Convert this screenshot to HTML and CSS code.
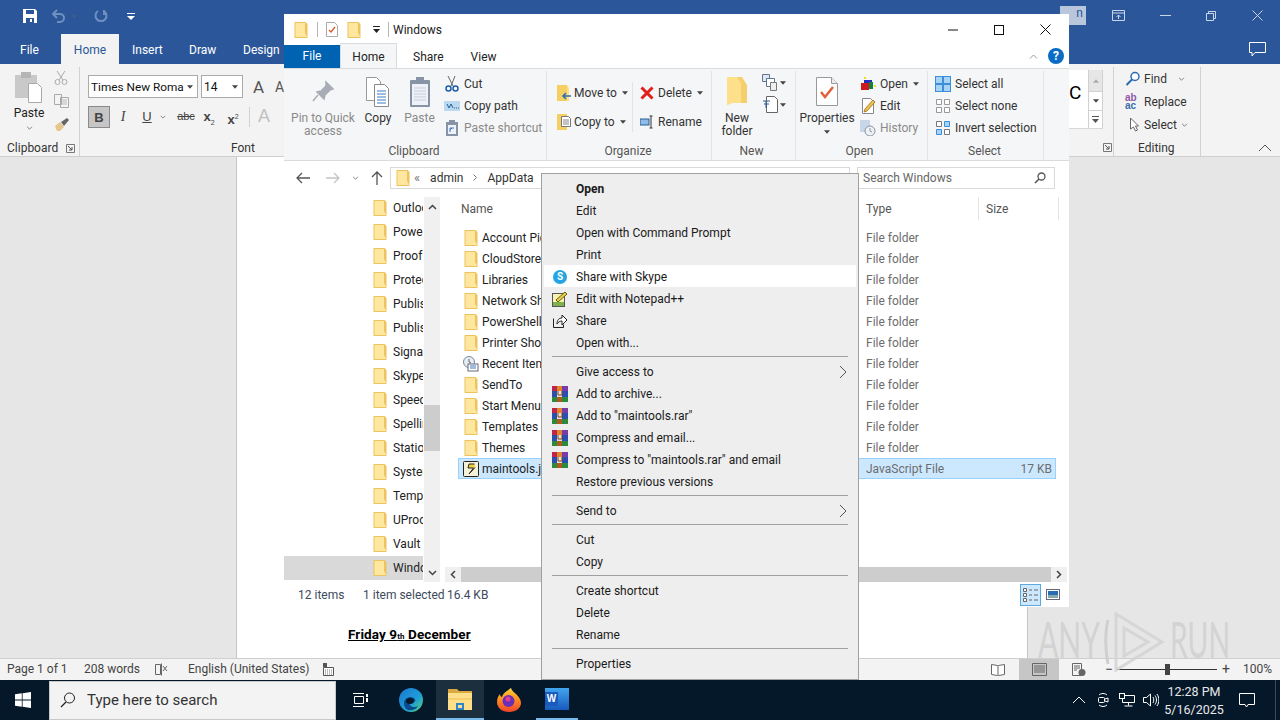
FILE: index.html
```html
<!DOCTYPE html>
<html>
<head>
    <meta charset="utf-8">
    <title>Windows</title>
    <link rel="stylesheet" href="styles.css">
</head>
<body>
<!-- shared icons -->
<svg class="defs" width="0" height="0">
    <symbol id="folder" viewBox="0 0 16 16">
        <path d="M1.500 0h11l2 2v14h-13z" fill="#eec25c"/>
        <path d="M2.500 1h9.500v10l2 3.500V15h-11.500z" fill="#ffe7a0"/>
    </symbol>
    <symbol id="rar" viewBox="0 0 16 16">
        <rect x="0" y="0" width="5" height="5" fill="#c0244a"/>
        <rect x="5" y="0" width="5" height="5" fill="#e0862a"/>
        <rect x="10" y="0" width="6" height="5" fill="#7a3aa8"/>
        <rect x="0" y="5" width="5" height="6" fill="#2a4fb0"/>
        <rect x="5" y="5" width="5" height="6" fill="#e8e0d0"/>
        <rect x="10" y="5" width="6" height="6" fill="#2a4fb0"/>
        <rect x="0" y="11" width="5" height="5" fill="#2c8a3c"/>
        <rect x="5" y="11" width="5" height="5" fill="#b05a20"/>
        <rect x="10" y="11" width="6" height="5" fill="#2c8a3c"/>
        <path d="M6 5v4h4V5" fill="none" stroke="#804018"/>
    </symbol>
    <symbol id="chev-r" viewBox="0 0 8 14">
        <path d="M1 1l6 6-6 6" fill="none" stroke="#555"/>
    </symbol>
    <symbol id="caret" viewBox="0 0 7 4">
        <path d="M0 0h7L3.500 4z" fill="#444"/>
    </symbol>
    <symbol id="vee" viewBox="0 0 8 5">
        <path d="M1 1l3 3 3-3" fill="none" stroke="#666"/>
    </symbol>
    <symbol id="launcher" viewBox="0 0 9 9">
        <path d="M.5.500h8v8h-8z" fill="none" stroke="#777"/>
        <path d="M2 2l4 4M6 3v3H3" fill="none" stroke="#555"/>
    </symbol>
</svg>

<!-- word window underneath -->
<div class="word">
    <div class="w-title">
        <div class="qat">
            <svg class="q-save" width="16" height="16" viewBox="0 0 16 16"><path d="M1 1h12l2 2v12H1z" fill="#fff"/><path d="M4 2h8v4H4zM4 10h8v5H4z" fill="#2b579a"/><rect x="8" y="11" width="2" height="3" fill="#fff"/></svg>
            <svg class="q-undo" width="14" height="14" viewBox="0 0 14 14"><path d="M5 1L1 5l4 4M1 5h7a4 4 0 0 1 0 8H5" fill="none" stroke="#6f8fbf" stroke-width="2"/></svg>
            <svg class="q-v1" width="7" height="4"><use href="#vee"/></svg>
            <svg class="q-redo" width="14" height="14" viewBox="0 0 14 14"><path d="M10 2a5.500 5.500 0 1 1-6 0M10 1v4h3" fill="none" stroke="#6f8fbf" stroke-width="2"/></svg>
            <svg class="q-more" width="8" height="8" viewBox="0 0 8 8"><path d="M0 1h8v1H0zM0 4h8L4 8z" fill="#fff"/></svg>
        </div>
        <div class="w-ctrls">
            <span class="signin">n</span>
            <svg class="c-1" width="13" height="11" viewBox="0 0 13 11"><path d="M.5.500h12v10H.500zM.5 3h12M6.500 9V5M4.500 7l2-2 2 2" fill="none" stroke="#c9d6ea"/></svg>
            <svg class="c-2" width="11" height="2"><rect width="11" height="1" fill="#c9d6ea"/></svg>
            <svg class="c-3" width="10" height="10" viewBox="0 0 10 10"><path d="M.5 2.500h7v7h-7zM2.500 2.500v-2h7v7h-2" fill="none" stroke="#c9d6ea"/></svg>
            <svg class="c-4" width="11" height="11" viewBox="0 0 11 11"><path d="M.5.500l10 10M10.500.500l-10 10" stroke="#c9d6ea" fill="none"/></svg>
        </div>
    </div>
    <div class="w-tabs">
        <span class="w-tab w-file">File</span>
        <span class="w-tab w-on">Home</span>
        <span class="w-tab w-ins">Insert</span>
        <span class="w-tab w-draw">Draw</span>
        <span class="w-tab w-design">Design</span>
        <svg class="w-comment" width="17" height="15" viewBox="0 0 17 15"><path d="M.5.500h16v10H6l-3 3.500v-3.500H.5z" fill="none" stroke="#fff"/></svg>
    </div>
    <div class="w-ribbon">
        <div class="wr-left">
            <div class="wg wg-clip">
                <div class="wg-body">
                    <div class="paste-big">
                        <svg width="28" height="31" viewBox="0 0 28 31"><rect x="0" y="3" width="22" height="23" fill="#c9c9c9"/><rect x="6" y="0" width="10" height="6" fill="#b5b5b5"/><path d="M13.500 11.500h9l4 4v15h-13z" fill="#fff" stroke="#aaa"/></svg>
                        <span>Paste</span>
                        <svg class="pb-v" width="7" height="4"><use href="#vee"/></svg>
                    </div>
                    <div class="paste-small">
                        <svg width="14" height="15" viewBox="0 0 14 15"><path d="M3 1l6 9M11 1l-6 9" stroke="#aaa" fill="none"/><circle cx="3.500" cy="12" r="2.500" fill="none" stroke="#aaa"/><circle cx="10.500" cy="12" r="2.500" fill="none" stroke="#aaa"/></svg>
                        <svg width="15" height="14" viewBox="0 0 15 14"><path d="M.5.500h7v10h-7zM6.500 3.500h8v10h-8z" fill="#f3f3f3" stroke="#aaa"/><path d="M8 6h5M8 8h5M8 10h5" stroke="#bbb"/></svg>
                        <svg width="16" height="15" viewBox="0 0 16 15"><path d="M1 9l5-4 4 5-4 4H3z" fill="#e6c78a"/><path d="M7 5l6-4 2 2-5 6z" fill="#666"/></svg>
                    </div>
                </div>
                <div class="wg-label">Clipboard<svg class="launch" width="9" height="9"><use href="#launcher"/></svg></div>
            </div>
            <div class="wg wg-font">
                <div class="wg-body wf">
                    <div class="wf-row">
                        <span class="combo c-name">Times New Roma<svg width="6" height="4"><use href="#caret"/></svg></span>
                        <span class="combo c-size">14<svg width="6" height="4"><use href="#caret"/></svg></span>
                        <span class="grow">A</span>
                        <span class="shrink">A</span>
                    </div>
                    <div class="wf-row wf-2">
                        <span class="fmt bold">B</span>
                        <span class="fmt ital">I</span>
                        <span class="fmt under">U</span>
                        <svg width="6" height="4"><use href="#vee"/></svg>
                        <span class="fmt strike">abc</span>
                        <span class="fmt subs">x<sub>2</sub></span>
                        <span class="fmt sups">x<sup>2</sup></span>
                        <span class="fmt-sep"></span>
                        <span class="fmt fade">A</span>
                    </div>
                </div>
                <div class="wg-label wl-font">Font</div>
            </div>
        </div>
        <div class="wr-right">
            <div class="gallery">
                <span class="g-c">C</span>
                <div class="g-scroll">
                    <span class="gs gs-up"><svg width="6" height="4" viewBox="0 0 7 4"><path d="M0 4h7L3.500 0z" fill="#aaa"/></svg></span>
                    <span class="gs"><svg width="6" height="4"><use href="#caret"/></svg></span>
                    <span class="gs gs-more"><svg width="7" height="7" viewBox="0 0 7 7"><path d="M0 0h7v1H0zM0 3h7L3.500 7z" fill="#555"/></svg></span>
                </div>
            </div>
            <svg class="launch-r" width="9" height="9"><use href="#launcher"/></svg>
            <div class="wg wg-edit">
                <div class="edit-list">
                    <div class="edit-row">
                        <svg width="15" height="15" viewBox="0 0 15 15"><circle cx="9.500" cy="5.500" r="4" fill="#fff" stroke="#2b6cb0" stroke-width="1.500"/><path d="M6.500 8.500L1 14" stroke="#2b6cb0" stroke-width="2"/></svg>
                        <span>Find</span><svg class="e-v" width="7" height="4"><use href="#vee"/></svg>
                    </div>
                    <div class="edit-row">
                        <span class="ab"><b>ab</b><i>ac</i></span>
                        <span>Replace</span>
                    </div>
                    <div class="edit-row">
                        <svg width="15" height="15" viewBox="0 0 15 15"><path d="M5 1v11l3-2 2 4 2-1-2-4h3z" fill="#fff" stroke="#666"/></svg>
                        <span>Select</span><svg class="e-v e-v2" width="7" height="4"><use href="#vee"/></svg>
                    </div>
                </div>
                <div class="wg-label">Editing</div>
            </div>
            <div class="collapse"><svg width="14" height="8" viewBox="0 0 14 8"><path d="M1 7l6-6 6 6" fill="none" stroke="#555"/></svg></div>
        </div>
    </div>
    <div class="w-doc">
        <div class="page">
            <p class="friday">Friday 9<span class="th">th</span> December</p>
        </div>
    </div>
    <div class="w-status">
        <span class="st-1">Page 1 of 1</span>
        <span class="st-2">208 words</span>
        <svg class="st-ic" width="13" height="13" viewBox="0 0 13 13"><path d="M.5 1.500h5v10h-5zM6.500.500v12" fill="none" stroke="#666"/><path d="M8 3l4 5M12 3L8 8" stroke="#666" fill="none"/></svg>
        <span class="st-3">English (United States)</span>
        <svg class="st-ic2" width="11" height="13" viewBox="0 0 11 13"><rect x="0" y="0" width="4" height="4" fill="#555"/><path d="M.5 4.500h10v8H.500z" fill="#fff" stroke="#555"/><path d="M2 7h7M2 9h7M2 11h7" stroke="#777" stroke-dasharray="1 1"/></svg>
        <div class="st-right">
            <svg class="v-read" width="14" height="13" viewBox="0 0 14 13"><path d="M.5 1.500l6 1 .5.500.5-.500 6-1v10l-6 1h-1l-6-1z" fill="#fff" stroke="#666"/><path d="M7 3v9" stroke="#666"/></svg>
            <span class="v-print"><svg width="15" height="13" viewBox="0 0 15 13"><path d="M.5.500h14v12H.500zM2 3h11M2 5h11M2 7h11M2 9h11" fill="none" stroke="#666"/></svg></span>
            <svg class="v-web" width="14" height="13" viewBox="0 0 14 13"><path d="M.5.500h9v12h-9zM2 3h6M2 5h6M2 7h3" fill="none" stroke="#666"/><circle cx="10" cy="9.500" r="3.500" fill="#666"/></svg>
            <span class="zm">&minus;</span>
            <span class="zbar"><span class="zthumb"></span></span>
            <span class="zm">+</span>
            <span class="zpct">100%</span>
        </div>
    </div>
</div>

<!-- taskbar -->
<div class="taskbar">
    <span class="start"><svg width="16" height="16" viewBox="0 0 16 16"><path d="M0 2.200L6.800 1.300v6.300H0zM7.600 1.200L16 0v7.600H7.600zM0 8.400h6.800v6.300L0 13.800zM7.600 8.400H16V16l-8.400-1.200z" fill="#fff"/></svg></span>
    <div class="search">
        <svg width="16" height="16" viewBox="0 0 16 16"><circle cx="9.500" cy="6" r="5" fill="none" stroke="#222"/><path d="M6 10l-5 5" stroke="#222" stroke-width="1.300"/></svg>
        <span>Type here to search</span>
    </div>
    <span class="tb-btn tb-view"><svg width="16" height="16" viewBox="0 0 16 16"><path d="M2.500 4.500h9v7h-9zM1 1.500h11M1 14.500h11" fill="none" stroke="#fff"/><rect x="14" y="2" width="2" height="3" fill="#fff"/><rect x="14" y="6" width="2" height="4" fill="#fff"/></svg></span>
    <span class="tb-btn tb-edge"><svg width="24" height="24" viewBox="0 0 24 24"><defs><linearGradient id="edge" x1="0" y1="0" x2="1" y2="1"><stop offset="0" stop-color="#1b77d2"/><stop offset=".6" stop-color="#1e9fd8"/><stop offset="1" stop-color="#5fd36a"/></linearGradient></defs><circle cx="12" cy="12" r="12" fill="url(#edge)"/><path d="M5 15c0-6 8-8 11-4 1 2 0 3-2 3-3 0-4 1-3 3 1 2 5 3 8 1-2 4-7 5-10 4-3-1-4-4-4-7z" fill="#0b4a8f"/><ellipse cx="11" cy="13" rx="4" ry="3" fill="#071a28"/></svg></span>
    <span class="tb-btn tb-open tb-active"><svg width="24" height="22" viewBox="0 0 24 22"><path d="M0 1h9l2 2h13v3H0z" fill="#d9a93f"/><rect x="0" y="5" width="24" height="17" fill="#ffe08a"/><rect x="0" y="10" width="24" height="2" fill="#f5cf6b"/><rect x="8" y="15" width="8" height="7" fill="#2e86c8"/><rect x="10" y="17" width="4" height="3" fill="#ffe08a"/></svg></span>
    <span class="tb-btn tb-fox"><svg width="24" height="24" viewBox="0 0 24 24"><defs><linearGradient id="fox" x1="0" y1="0" x2="0" y2="1"><stop offset="0" stop-color="#ffd23a"/><stop offset=".5" stop-color="#ff8a1e"/><stop offset="1" stop-color="#f0442c"/></linearGradient></defs><path d="M14 0c1 3 3 4 5 6 3 3 5 6 5 9 0 5-5 9-12 9S0 20 0 14c0-3 1-6 3-8 0 2 1 3 2 3 1-4 5-6 9-9z" fill="url(#fox)"/><circle cx="11.500" cy="13" r="6" fill="#6b2fb5"/><circle cx="11" cy="11" r="2.500" fill="#e23d8e"/></svg></span>
    <span class="tb-btn tb-active tb-word"><span class="wicon"><span class="wletter">W</span></span></span>
    <div class="tray">
        <span><svg width="14" height="8" viewBox="0 0 14 8"><path d="M1 7l6-6 6 6" fill="none" stroke="#fff"/></svg></span>
        <span><svg width="12" height="16" viewBox="0 0 12 16"><path d="M2 3c2-2 6-2 8 0M2 13c2 2 6 2 8 0" fill="none" stroke="#fff"/><rect x="1.500" y="5.500" width="6" height="5" rx="1" fill="none" stroke="#fff"/><path d="M8 7l3-1v4l-3-1" fill="none" stroke="#fff"/></svg></span>
        <span><svg width="16" height="14" viewBox="0 0 16 14"><path d="M3.500 2.500h12v7h-12zM9.500 9.500v3M5.500 13h8" fill="none" stroke="#fff"/><rect x=".5" y=".5" width="5" height="5" fill="#071a28" stroke="#fff"/></svg></span>
        <span><svg width="16" height="14" viewBox="0 0 16 14"><path d="M.5 4.500h3l4-3.500v12l-4-3.500h-3z" fill="none" stroke="#fff"/><path d="M10 4c1 2 1 4 0 6M12 2.500c2 3 2 6 0 9M14 1c2.500 4 2.500 8 0 12" fill="none" stroke="#fff"/></svg></span>
    </div>
    <div class="clock"><span>12:28 PM</span><span>5/16/2025</span></div>
    <span class="notify"><svg width="16" height="15" viewBox="0 0 16 15"><path d="M.5.500h15v11H9l-1.500 2.500L6 11.500H.5z" fill="none" stroke="#fff"/></svg></span>
    <span class="peek"></span>
</div>

<!-- explorer window -->
<div class="explorer">
    <div class="x-title">
        <svg width="16" height="16"><use href="#folder"/></svg>
        <span class="x-bar"></span>
        <svg width="12" height="15" viewBox="0 0 12 15"><path d="M.5.500h8l3 3v11h-11z" fill="#fff" stroke="#aaa"/><path d="M3 8l2 2 4-5" fill="none" stroke="#d9552c" stroke-width="1.300"/></svg>
        <svg width="16" height="16"><use href="#folder"/></svg>
        <svg class="x-more" width="7" height="7" viewBox="0 0 7 7"><path d="M0 0h7v1H0zM0 3h7L3.500 7z" fill="#222"/></svg>
        <span class="x-bar"></span>
        <span class="x-name">Windows</span>
        <div class="x-ctrls">
            <svg width="10" height="10" viewBox="0 0 10 10"><path d="M0 5h10" stroke="#111"/></svg>
            <svg width="10" height="10" viewBox="0 0 10 10"><rect x=".5" y=".5" width="9" height="9" fill="none" stroke="#111"/></svg>
            <svg width="11" height="11" viewBox="0 0 11 11"><path d="M.5.500l10 10M10.500.500l-10 10" fill="none" stroke="#111"/></svg>
        </div>
    </div>
    <div class="x-tabs">
        <span class="x-tab x-file">File</span>
        <span class="x-tab x-on">Home</span>
        <span class="x-tab x-share">Share</span>
        <span class="x-tab x-view">View</span>
        <div class="x-help">
            <svg width="9" height="5" viewBox="0 0 9 5"><path d="M1 4.500l3.500-3.500L8 4.500" fill="none" stroke="#999"/></svg>
            <span class="help-dot">?</span>
        </div>
    </div>
    <div class="x-ribbon">
        <div class="rg rg-clip">
            <div class="rg-body">
                <div class="big big-pin">
                    <svg width="30" height="30" viewBox="0 0 30 30"><path d="M18 5l7 7-3 1-5 5-1 4-7-7 4-1 5-5zM10 18l-5 6" fill="#a8adb5" stroke="#a8adb5" stroke-width="1.500"/></svg>
                    <span class="fade">Pin to Quick<br>access</span>
                </div>
                <div class="big big-copy">
                    <svg width="30" height="30" viewBox="0 0 30 30"><path d="M3.500 .500h10l4 4v19h-14z" fill="#fff" stroke="#999"/><path d="M11.500 7.500h10l4 4v18h-14z" fill="#fff" stroke="#8a8a8a"/><path d="M14 14h9M14 17h9M14 20h9M14 23h9M14 26h9" stroke="#3a79c4"/></svg>
                    <span>Copy</span>
                </div>
                <div class="big big-paste">
                    <svg width="30" height="30" viewBox="0 0 30 30"><rect x="5" y="3" width="20" height="27" rx="1" fill="#8794a6"/><rect x="7" y="7" width="16" height="21" fill="#eef2f8"/><rect x="11" y="0" width="8" height="6" fill="#8794a6"/><path d="M9 11h12M9 14h12M9 17h12M9 20h12M9 23h12" stroke="#c6cfdc"/></svg>
                    <span class="fade">Paste</span>
                </div>
                <div class="small">
                    <div class="sm-row sm-cut"><svg width="16" height="16" viewBox="0 0 16 16"><path d="M4 0l5 10M11 0L7 10" stroke="#666" fill="none"/><circle cx="4.500" cy="12.500" r="2.500" fill="none" stroke="#1f5fa8" stroke-width="1.500"/><circle cx="11.500" cy="12.500" r="2.500" fill="none" stroke="#1f5fa8" stroke-width="1.500"/></svg><span>Cut</span></div>
                    <div class="sm-row sm-cut"><svg width="16" height="16" viewBox="0 0 16 16"><rect x="0" y="3" width="16" height="10" fill="#bcd9f2"/><path d="M3 6l2 4 2-4 2 4M10 10h1M12 10h1M14 10h1" stroke="#2a5c96" fill="none"/></svg><span>Copy path</span></div>
                    <div class="sm-row sm-cut"><svg width="16" height="16" viewBox="0 0 16 16"><rect x="2" y="2" width="12" height="14" fill="#8794a6"/><rect x="4" y="5" width="8" height="9" fill="#eef2f8"/><rect x="5" y="0" width="6" height="4" fill="#8794a6"/><path d="M6 12V8h4M8 8L6 10" stroke="#3a79c4" fill="none"/></svg><span class="fade">Paste shortcut</span></div>
                </div>
            </div>
            <div class="rg-label">Clipboard</div>
        </div>
        <div class="rg rg-org">
            <div class="rg-body org">
                <div class="org-col">
                    <div class="org-row"><svg width="16" height="16" viewBox="0 0 16 16"><path d="M0 0h10l2 3v13H0z" fill="#ffdf80"/><path d="M0 0h10v16H0z" fill="#f6cf63"/><path d="M14 11H7M9 8l-3 3 3 3" stroke="#2a6cb5" stroke-width="1.500" fill="none"/></svg><span>Move to</span><svg width="6" height="4"><use href="#caret"/></svg></div>
                    <div class="org-row"><svg width="16" height="16" viewBox="0 0 16 16"><path d="M0 0h10v16H0z" fill="#f6cf63"/><path d="M4.500 2.500h7l2 2v8h-9z" fill="#fff" stroke="#777"/><path d="M6 6h6M6 8h6M6 10h6" stroke="#888"/></svg><span>Copy to</span><svg width="6" height="4"><use href="#caret"/></svg></div>
                </div>
                <span class="org-sep"></span>
                <div class="org-col">
                    <div class="org-row"><svg width="14" height="14" viewBox="0 0 14 14"><path d="M1.500 1.500l11 11M12.500 1.500l-11 11" stroke="#e0201b" stroke-width="3"/></svg><span class="gap2">Delete</span><svg width="6" height="4"><use href="#caret"/></svg></div>
                    <div class="org-row"><svg width="14" height="14" viewBox="0 0 14 14"><rect x="0" y="4" width="9" height="6" fill="#8fbbe6" stroke="#2a5c96"/><path d="M11 1v12M9.500 1h3M9.500 13h3" stroke="#333"/></svg><span class="gap2">Rename</span></div>
                </div>
            </div>
            <div class="rg-label">Organize</div>
        </div>
        <div class="rg rg-new">
            <div class="rg-body">
                <div class="big big-folder">
                    <svg width="22" height="30" viewBox="0 0 22 30"><path d="M1 0h15l5 8v18H6L1 28z" fill="#f5cf6b"/><path d="M1 0h10l4 6v20H5l-4 2z" fill="#ffe08a"/></svg>
                    <span>New<br>folder</span>
                </div>
                <div class="new-side">
                    <span><svg width="17" height="17" viewBox="0 0 17 17"><path d="M.5.500h7v7h-7z" fill="#dfe8f3" stroke="#5f7590"/><path d="M4.500 4.500h8v8h-8z" fill="#fff" stroke="#5f7590"/><path d="M8.500 8.500h6v8h-6z" fill="#eee" stroke="#777"/></svg><svg width="6" height="4"><use href="#caret"/></svg></span>
                    <span><svg width="17" height="17" viewBox="0 0 17 17"><path d="M4.500 .500h8l3 3v13h-11z" fill="#fff" stroke="#666"/><path d="M1 5h7M2 8h5M4 5v7" stroke="#2a5c96"/></svg><svg width="6" height="4"><use href="#caret"/></svg></span>
                </div>
            </div>
            <div class="rg-label">New</div>
        </div>
        <div class="rg rg-open">
            <div class="rg-body">
                <div class="big big-prop">
                    <svg width="22" height="30" viewBox="0 0 22 30"><path d="M.5.500h15l6 6v22H.500z" fill="#fff" stroke="#999"/><path d="M15.500.500v6h6" fill="#eee" stroke="#999"/><path d="M5 15l4 5 8-10" fill="none" stroke="#e2603a" stroke-width="2.500"/></svg>
                    <span>Properties</span>
                    <svg class="caret-b" width="6" height="4"><use href="#caret"/></svg>
                </div>
                <div class="small sm-open">
                    <div class="sm-row"><svg width="16" height="16" viewBox="0 0 16 16"><rect x="1" y="7" width="8" height="7" fill="#d0181f"/><path d="M4 4h8v3H4z" fill="#2230c0"/><rect x="9" y="6" width="4" height="7" fill="#16803a"/><rect x="4" y="1" width="2" height="2" fill="#e8e020"/><rect x="14" y="9" width="2" height="2" fill="#e8e020"/></svg><span>Open</span><svg width="6" height="4"><use href="#caret"/></svg></div>
                    <div class="sm-row"><svg width="16" height="16" viewBox="0 0 16 16"><path d="M2.500 .500h8l3 3v12h-11z" fill="#fff" stroke="#888"/><path d="M4 14l1-3 8-9 2 2-8 9z" fill="#f2c14e" stroke="#a9822a"/></svg><span>Edit</span></div>
                    <div class="sm-row"><svg width="16" height="16" viewBox="0 0 16 16"><rect x="0" y="0" width="10" height="12" fill="#c9d6e8"/><circle cx="10" cy="11" r="5" fill="#eef1f5" stroke="#8794a6"/><path d="M10 8v3l2 1" stroke="#8794a6" fill="none"/></svg><span class="fade">History</span></div>
                </div>
            </div>
            <div class="rg-label">Open</div>
        </div>
        <div class="rg rg-sel">
            <div class="small sm-sel">
                <div class="sm-row"><svg width="16" height="16" viewBox="0 0 16 16"><rect width="16" height="16" fill="#3a8fd8"/><path d="M1 1h6v6H1zM9 1h6v6H9zM1 9h6v6H1zM9 9h6v6H9z" fill="#a9d3f5"/></svg><span>Select all</span></div>
                <div class="sm-row"><svg width="16" height="16" viewBox="0 0 16 16"><path d="M1.500 1.500h5v5h-5zM9.500 1.500h5v5h-5zM1.500 9.500h5v5h-5zM9.500 9.500h5v5h-5z" fill="#fff" stroke="#999"/></svg><span>Select none</span></div>
                <div class="sm-row"><svg width="16" height="16" viewBox="0 0 16 16"><path d="M1.500 9.500h5v5h-5zM9.500 1.500h5v5h-5z" fill="#a9d3f5" stroke="#3a8fd8"/><path d="M1.500 1.500h5v5h-5zM9.500 9.500h5v5h-5z" fill="#fff" stroke="#777"/></svg><span>Invert selection</span></div>
            </div>
            <div class="rg-label">Select</div>
        </div>
    </div>
    <div class="x-addr">
        <svg class="nav-b" width="14" height="12" viewBox="0 0 14 12"><path d="M6 1L1 6l5 5M1 6h13" fill="none" stroke="#555" stroke-width="1.300"/></svg>
        <svg class="nav-f" width="14" height="12" viewBox="0 0 14 12"><path d="M8 1l5 5-5 5M13 6H0" fill="none" stroke="#c4c4c4" stroke-width="1.300"/></svg>
        <svg class="nav-d" width="7" height="4"><use href="#vee"/></svg>
        <svg class="nav-u" width="12" height="14" viewBox="0 0 12 14"><path d="M1 6l5-5 5 5M6 1v13" fill="none" stroke="#555" stroke-width="1.300"/></svg>
        <div class="addr-box">
            <svg width="16" height="16"><use href="#folder"/></svg>
            <span class="crumb-c">&laquo;</span>
            <span class="crumb">admin</span>
            <svg class="crumb-s" width="4" height="7" viewBox="0 0 8 14"><path d="M1 1l6 6-6 6" fill="none" stroke="#777" stroke-width="2"/></svg>
            <span class="crumb">AppData</span>
        </div>
        <div class="search-box">
            <span>Search Windows</span>
            <svg width="12" height="12" viewBox="0 0 12 12"><circle cx="7.500" cy="4.500" r="3.500" fill="none" stroke="#555" stroke-width="1.300"/><path d="M5 7l-4 4" stroke="#555" stroke-width="1.600"/></svg>
        </div>
    </div>
    <div class="x-main">
        <div class="nav-pane">
            <ul class="nav-list">
                <li><svg width="16" height="16"><use href="#folder"/></svg>Outlook</li>
                <li><svg width="16" height="16"><use href="#folder"/></svg>PowerPoint</li>
                <li><svg width="16" height="16"><use href="#folder"/></svg>Proof</li>
                <li><svg width="16" height="16"><use href="#folder"/></svg>Protect</li>
                <li><svg width="16" height="16"><use href="#folder"/></svg>Publisher</li>
                <li><svg width="16" height="16"><use href="#folder"/></svg>Publisher</li>
                <li><svg width="16" height="16"><use href="#folder"/></svg>Signatures</li>
                <li><svg width="16" height="16"><use href="#folder"/></svg>Skype</li>
                <li><svg width="16" height="16"><use href="#folder"/></svg>Speech</li>
                <li><svg width="16" height="16"><use href="#folder"/></svg>Spelling</li>
                <li><svg width="16" height="16"><use href="#folder"/></svg>Stationery</li>
                <li><svg width="16" height="16"><use href="#folder"/></svg>SystemCert</li>
                <li><svg width="16" height="16"><use href="#folder"/></svg>Templates</li>
                <li><svg width="16" height="16"><use href="#folder"/></svg>UProof</li>
                <li><svg width="16" height="16"><use href="#folder"/></svg>Vault</li>
                <li class="nav-on"><svg width="16" height="16"><use href="#folder"/></svg>Windows</li>
            </ul>
            <div class="v-scroll">
                <span class="vs-btn"><svg width="9" height="6" viewBox="0 0 9 6"><path d="M1 5l3.500-3.500L8 5" fill="none" stroke="#444" stroke-width="1.500"/></svg></span>
                <span class="vs-thumb"></span>
                <span class="vs-btn vs-down"><svg width="9" height="6" viewBox="0 0 9 6"><path d="M1 1l3.500 3.500L8 1" fill="none" stroke="#444" stroke-width="1.500"/></svg></span>
            </div>
        </div>
        <div class="file-pane">
            <div class="f-head">
                <span class="h-name">Name</span>
                <span class="h-type">Type</span>
                <span class="h-size">Size</span>
            </div>
            <div class="f-rows">
                <div class="f-row"><svg width="16" height="16"><use href="#folder"/></svg><span class="f-name">Account Pictures</span><span class="f-type">File folder</span></div>
                <div class="f-row"><svg width="16" height="16"><use href="#folder"/></svg><span class="f-name">CloudStore</span><span class="f-type">File folder</span></div>
                <div class="f-row"><svg width="16" height="16"><use href="#folder"/></svg><span class="f-name">Libraries</span><span class="f-type">File folder</span></div>
                <div class="f-row"><svg width="16" height="16"><use href="#folder"/></svg><span class="f-name">Network Shortcuts</span><span class="f-type">File folder</span></div>
                <div class="f-row"><svg width="16" height="16"><use href="#folder"/></svg><span class="f-name">PowerShell</span><span class="f-type">File folder</span></div>
                <div class="f-row"><svg width="16" height="16"><use href="#folder"/></svg><span class="f-name">Printer Shortcuts</span><span class="f-type">File folder</span></div>
                <div class="f-row"><svg width="16" height="16" viewBox="0 0 16 16"><circle cx="6" cy="6" r="5.500" fill="#e8eef5" stroke="#7a8794"/><path d="M6 3v3l2 1" stroke="#567" fill="none"/><rect x="5" y="8" width="10" height="7" fill="#fff" stroke="#667"/><path d="M7 10h6M7 12h6" stroke="#3a79c4"/></svg><span class="f-name">Recent Items</span><span class="f-type">File folder</span></div>
                <div class="f-row"><svg width="16" height="16"><use href="#folder"/></svg><span class="f-name">SendTo</span><span class="f-type">File folder</span></div>
                <div class="f-row"><svg width="16" height="16"><use href="#folder"/></svg><span class="f-name">Start Menu</span><span class="f-type">File folder</span></div>
                <div class="f-row"><svg width="16" height="16"><use href="#folder"/></svg><span class="f-name">Templates</span><span class="f-type">File folder</span></div>
                <div class="f-row"><svg width="16" height="16"><use href="#folder"/></svg><span class="f-name">Themes</span><span class="f-type">File folder</span></div>
                <div class="f-row f-sel"><svg width="16" height="16" viewBox="0 0 16 16"><rect x=".5" y=".5" width="15" height="15" rx="1" fill="#f4f1d8" stroke="#222"/><path d="M11.500 3H6L5 7h5.500L6 13l6-6.500" fill="#efd23e" stroke="#222"/></svg><span class="f-name">maintools.js</span><span class="f-type">JavaScript File</span><span class="f-size">17 KB</span></div>
            </div>
            <div class="h-scroll">
                <span class="hs-btn"><svg width="6" height="9" viewBox="0 0 6 9"><path d="M5 1L1.500 4.500 5 8" fill="none" stroke="#444" stroke-width="1.500"/></svg></span>
                <span class="hs-thumb"></span>
                <span class="hs-btn"><svg width="6" height="9" viewBox="0 0 6 9"><path d="M1 1l3.500 3.500L1 8" fill="none" stroke="#444" stroke-width="1.500"/></svg></span>
            </div>
        </div>
    </div>
    <div class="x-status">
        <span class="xs-1">12 items</span>
        <span class="xs-2">1 item selected</span>
        <span class="xs-3">16.4 KB</span>
        <div class="xs-views">
            <span class="xv xv-on"><svg width="16" height="14" viewBox="0 0 16 14"><path d="M.5.500h3v3h-3zM.5 5.500h3v3h-3zM.5 10.500h3v3h-3z" fill="#fff" stroke="#666"/><path d="M6 2h3M11 2h4M6 7h3M11 7h4M6 12h3M11 12h4" stroke="#666"/></svg></span>
            <span class="xv"><svg width="14" height="11" viewBox="0 0 14 11"><rect x=".5" y=".5" width="13" height="10" fill="#fff" stroke="#667"/><rect x="2" y="2" width="10" height="4" fill="#2a6cb5"/><rect x="2" y="6" width="10" height="3" fill="#8aa"/></svg></span>
        </div>
    </div>
</div>

<!-- right click menu -->
<div class="menu">
    <div class="mi mi-open"><span class="mi-ic"></span>Open</div>
    <div class="mi"><span class="mi-ic"></span>Edit</div>
    <div class="mi"><span class="mi-ic"></span>Open with Command Prompt</div>
    <div class="mi"><span class="mi-ic"></span>Print</div>
    <div class="mi mi-hover"><span class="mi-ic"><span class="skype">S</span></span>Share with Skype</div>
    <div class="mi"><span class="mi-ic"><svg width="16" height="16" viewBox="0 0 16 16"><rect x=".5" y="2.500" width="12" height="13" fill="#f7f2b0" stroke="#555"/><rect x="1" y="11" width="11" height="4" fill="#7fb24a"/><path d="M4 9l9-8 2 2-9 8z" fill="#e8d14a" stroke="#6a5a10"/></svg></span>Edit with Notepad++</div>
    <div class="mi"><span class="mi-ic"><svg width="16" height="16" viewBox="0 0 16 16"><path d="M1.500 5.500v9h10v-3" fill="none" stroke="#222"/><path d="M5 11c0-4 2-6 5-6V2l5 5-5 5V8c-2 0-4 1-5 3z" fill="#fff" stroke="#222"/></svg></span>Share</div>
    <div class="mi"><span class="mi-ic"></span>Open with...</div>
    <div class="m-sep"></div>
    <div class="mi"><span class="mi-ic"></span>Give access to<svg class="mi-arrow" width="8" height="14"><use href="#chev-r"/></svg></div>
    <div class="mi"><span class="mi-ic"><svg width="16" height="16"><use href="#rar"/></svg></span>Add to archive...</div>
    <div class="mi"><span class="mi-ic"><svg width="16" height="16"><use href="#rar"/></svg></span>Add to "maintools.rar"</div>
    <div class="mi"><span class="mi-ic"><svg width="16" height="16"><use href="#rar"/></svg></span>Compress and email...</div>
    <div class="mi"><span class="mi-ic"><svg width="16" height="16"><use href="#rar"/></svg></span>Compress to "maintools.rar" and email</div>
    <div class="mi"><span class="mi-ic"></span>Restore previous versions</div>
    <div class="m-sep"></div>
    <div class="mi"><span class="mi-ic"></span>Send to<svg class="mi-arrow" width="8" height="14"><use href="#chev-r"/></svg></div>
    <div class="m-sep"></div>
    <div class="mi"><span class="mi-ic"></span>Cut</div>
    <div class="mi"><span class="mi-ic"></span>Copy</div>
    <div class="m-sep"></div>
    <div class="mi"><span class="mi-ic"></span>Create shortcut</div>
    <div class="mi"><span class="mi-ic"></span>Delete</div>
    <div class="mi"><span class="mi-ic"></span>Rename</div>
    <div class="m-sep"></div>
    <div class="mi"><span class="mi-ic"></span>Properties</div>
</div>

<!-- watermark -->
<svg class="watermark" width="200" height="70" viewBox="0 0 200 70">
    <text x="0" y="50" class="wm-text" textLength="62" lengthAdjust="spacingAndGlyphs">ANY</text>
    <path d="M70 12c-3 12-3 30 0 44" fill="none" stroke="#cfcfcf" stroke-width="3"/>
    <path d="M78 6l46 28-46 28z M86 20l24 14-24 14z" fill="none" stroke="#d2d2d2" stroke-width="3" opacity=".85"/>
    <text x="132" y="50" class="wm-text" textLength="60" lengthAdjust="spacingAndGlyphs">RUN</text>
</svg>
</body>
</html>
```

FILE: styles.css
```css
* {
    box-sizing: border-box;
}
html, body {
    margin: 0;
    padding: 0;
    width: 1280px;
    height: 720px;
    overflow: hidden;
}
body {
    position: relative;
    font-family: Roboto, "Noto Sans", sans-serif;
    font-size: 12px;
    color: #222;
    background: #e6e6e6;
    display: flex;
    flex-direction: column;
}
svg {
    flex: none;
    display: block;
}
.defs {
    position: absolute;
}

/* word */
.word {
    height: 680px;
    display: flex;
    flex-direction: column;
}
.w-title {
    height: 34px;
    background: #2b579a;
    display: flex;
    align-items: center;
    justify-content: space-between;
}
.qat {
    display: flex;
    align-items: center;
    padding: 0 0 3px 22px;
}
.q-undo { margin-left: 14px; }
.q-v1 { margin-left: 5px; }
.q-redo { margin-left: 16px; }
.q-more { margin-left: 19px; }
.w-ctrls {
    display: flex;
    align-items: center;
    padding-bottom: 3px;
    width: 220px;
}
.signin {
    width: 26px;
    height: 19px;
    background: #b9c7dc;
    color: #2b579a;
    text-align: right;
    padding-right: 3px;
}
.c-1 { margin-left: 26px; }
.c-2 { margin-left: 35px; }
.c-3 { margin-left: 35px; }
.c-4 { margin-left: 36px; }
.w-tabs {
    height: 30px;
    background: #2b579a;
    display: flex;
    align-items: center;
    color: #fff;
}
.w-tab {
    padding-top: 2px;
    height: 30px;
    line-height: 28px;
    white-space: nowrap;
}
.w-file {
    width: 61px;
    padding-left: 20px;
}
.w-on {
    width: 58px;
    text-align: center;
    background: #f3f3f3;
    color: #2b579a;
}
.w-ins {
    width: 61px;
    padding-left: 13px;
}
.w-draw {
    width: 54px;
    padding-left: 9px;
}
.w-design {
    padding-left: 9px;
}
.w-comment {
    margin-left: auto;
    margin-right: 14px;
}
.w-ribbon {
    height: 93px;
    background: #f3f3f3;
    border-bottom: 1px solid #cfcfcf;
    display: flex;
    justify-content: space-between;
}
.wr-left, .wr-right {
    display: flex;
}
.wg {
    display: flex;
    flex-direction: column;
    border-right: 1px solid #d2d2d2;
    margin: 3px 0 0;
}
.wg-body {
    flex: 1;
    display: flex;
}
.wg-label {
    height: 16px;
    line-height: 16px;
    display: flex;
    align-items: center;
    color: #333;
}
.wg-clip {
    width: 80px;
}
.wg-clip .wg-label {
    padding-left: 7px;
}
.launch {
    margin-left: 8px;
}
.paste-big {
    width: 58px;
    display: flex;
    flex-direction: column;
    align-items: center;
    padding-top: 5px;
}
.paste-big span {
    margin-top: 3px;
}
.pb-v {
    margin-top: 6px;
}
.paste-small {
    display: flex;
    flex-direction: column;
    gap: 9px;
    padding-top: 3px;
    margin-left: -4px;
}
.wg-font {
    width: 300px;
    border: 0;
}
.wf {
    flex-direction: column;
    padding: 8px 0 0 8px;
}
.wf-row {
    display: flex;
    align-items: center;
    gap: 3px;
}
.combo {
    height: 23px;
    background: #fff;
    border: 1px solid #ababab;
    display: flex;
    align-items: center;
    justify-content: space-between;
    padding: 0 4px 0 2px;
    color: #111;
    white-space: nowrap;
}
.c-name {
    width: 110px;
    font-size: 11.800px;
}
.c-size {
    width: 42px;
}
.grow {
    margin-left: 7px;
    font-size: 17px;
    color: #555;
}
.shrink {
    margin-left: 8px;
    font-size: 14px;
    color: #555;
}
.wf-2 {
    margin-top: 8px;
    gap: 0;
}
.fmt {
    width: 22px;
    height: 22px;
    line-height: 21px;
    text-align: center;
    margin-right: 2px;
    font-family: "Liberation Sans", sans-serif;
    font-size: 13px;
    color: #444;
}
.bold {
    background: #c6c6c6;
    border: 1px solid #8a8a8a;
    font-weight: bold;
}
.ital {
    font-style: italic;
    font-family: "Liberation Serif", serif;
    font-size: 14px;
}
.under {
    text-decoration: underline;
}
.strike {
    width: 24px;
    margin-left: 8px;
    margin-right: 0;
    font-size: 11px;
    text-decoration: line-through;
}
.subs, .sups {
    font-weight: bold;
}
.subs sub, .sups sup {
    font-size: 7px;
    font-weight: normal;
}
.fmt-sep {
    width: 1px;
    height: 20px;
    background: #d2d2d2;
    margin: 0 3px 0 3px;
}
.fmt.fade {
    font-size: 18px;
    color: #c0c0c0;
}
.wl-font {
    padding-left: 151px;
}
.wr-right {
    width: 211px;
}
.gallery {
    width: 34px;
    height: 59px;
    margin-top: 6px;
    background: #fff;
    display: flex;
    align-items: flex-start;
    border-bottom: 1px solid #d8d8d8;
    justify-content: flex-end;
}
.g-c {
    margin-right: 7px;
    margin-top: 11px;
    font-size: 19px;
    line-height: 24px;
    color: #000;
}
.g-scroll {
    width: 15px;
    height: 58px;
    display: flex;
    flex-direction: column;
    border: 1px solid #d0d0d0;
    border-width: 0 1px;
}
.gs {
    flex: 1;
    display: flex;
    align-items: center;
    justify-content: center;
    border-bottom: 1px solid #d0d0d0;
}
.gs-up {
    flex: 1.200;
    background: #e6e6e6;
}
.gs-more {
    border: 0;
}
.launch-r {
    margin: 79px 1px 0 0;
}
.wg-edit {
    width: 88px;
    border-left: 1px solid #d2d2d2;
    color: #333;
}
.edit-list {
    flex: 1;
    padding: 0 0 0 11px;
}
.edit-row {
    height: 23px;
    display: flex;
    align-items: center;
}
.edit-row > svg:first-child, .ab {
    width: 16px;
    margin-right: 3px;
}
.ab {
    font-family: "Liberation Sans", sans-serif;
    font-size: 10px;
    line-height: 8px;
    display: flex;
    flex-direction: column;
    height: 16px;
}
.ab b {
    color: #8e5aa8;
}
.ab i {
    font-style: normal;
    font-weight: bold;
    color: #3a6ea5;
}
.e-v {
    margin-left: 11px;
}
.e-v2 {
    margin-left: 4px;
}
.wg-edit .wg-label {
    padding-left: 24px;
}
.collapse {
    flex: 1;
    display: flex;
    align-items: flex-end;
    justify-content: flex-end;
    padding: 0 8px 4px 0;
}
.w-doc {
    flex: 1;
    display: flex;
    padding-left: 236px;
    background: #e6e6e6;
    min-height: 0;
}
.page {
    width: 792px;
    background: #fff;
    border: 1px solid #c6c6c6;
    border-width: 0 1px;
    display: flex;
    align-items: flex-end;
    padding: 0 0 12px 111px;
}
.friday {
    margin: 0;
    font-size: 13.500px;
    line-height: 18px;
    letter-spacing: .1px;
    font-weight: bold;
    color: #000;
    text-decoration: underline;
}
.th {
    font-size: 8px;
}
.w-status {
    height: 22px;
    flex: none;
    background: #f3f3f3;
    border-top: 1px solid #cfcfcf;
    display: flex;
    align-items: center;
    font-size: 12px;
    color: #444;
    padding-bottom: 1px;
}
.st-1 { margin-left: 7px; width: 77px; }
.st-2 { width: 71px; }
.st-ic { width: 13px; }
.st-3 { margin-left: 20px; width: 135px; }
.st-ic2 { width: 11px; }
.st-right {
    margin-left: auto;
    display: flex;
    align-items: center;
    height: 20px;
}
.v-print {
    width: 40px;
    height: 21px;
    margin-left: 14px;
    background: #c6c6c6;
    display: flex;
    align-items: center;
    justify-content: center;
}
.v-web { margin-left: 13px; margin-right: 15px; }
.zm {
    width: 16px;
    text-align: center;
    font-size: 14px;
}
.zbar {
    width: 100px;
    height: 1px;
    background: #333;
    margin: 0 1px 0 0;
    display: flex;
    justify-content: center;
    align-items: center;
}
.zthumb {
    width: 5px;
    height: 11px;
    background: #444;
}
.zpct {
    width: 30px;
    text-align: right;
    margin: 0 8px 0 8px;
}

/* taskbar */
.taskbar {
    height: 40px;
    flex: none;
    background: #05182a;
    display: flex;
    align-items: center;
    color: #fff;
}
.start {
    width: 49px;
    padding-left: 15px;
}
.search {
    width: 287px;
    height: 39px;
    margin-top: 1px;
    background: #f3f3f3;
    border: 1px solid #c8c8c8;
    display: flex;
    align-items: center;
    padding-left: 10px;
    padding-bottom: 2px;
    font-size: 15px;
    color: #333;
    gap: 11px;
}
.tb-btn {
    width: 48px;
    height: 40px;
    display: flex;
    align-items: center;
    justify-content: center;
}
.tb-edge {
    margin-left: 3px;
}
.tb-open {
    background: #1c2f3e;
    margin-left: 1px;
}
.tb-active {
    border-bottom: 2px solid #76b9ed;
}
.tb-fox {
    margin-left: 1px;
}
.tb-word {
    width: 42px;
    margin-left: 3px;
}
.wicon {
    width: 24px;
    height: 22px;
    background: linear-gradient(#41a5ee, #185abd);
    display: flex;
    align-items: center;
}
.wletter {
    width: 13px;
    height: 14px;
    line-height: 14px;
    text-align: center;
    background: #185abd;
    font-family: "Liberation Sans", sans-serif;
    font-size: 10px;
    font-weight: bold;
}
.tray {
    margin-left: auto;
    display: flex;
    align-items: center;
}
.tray span {
    width: 24px;
    display: flex;
    justify-content: center;
}
.clock {
    width: 62px;
    margin-right: 10px;
    padding-top: 1px;
    display: flex;
    flex-direction: column;
    align-items: center;
    font-size: 12.500px;
    line-height: 18px;
    color: #e8e8e8;
}
.notify {
    width: 24px;
    display: flex;
    justify-content: center;
}
.peek {
    width: 1px;
    height: 40px;
    margin-left: 16px;
    margin-right: 4px;
    background: #3a4a58;
}

/* explorer, sits over word */
.explorer {
    position: absolute;
    left: 284px;
    top: 14px;
    width: 785px;
    height: 593px;
    background: #fff;
    display: flex;
    flex-direction: column;
}
.x-title {
    height: 30px;
    flex: none;
    display: flex;
    align-items: center;
    padding-left: 9px;
    padding-top: 1px;
    gap: 8px;
}
.x-bar {
    width: 1px;
    height: 15px;
    background: #b5b5b5;
}
.x-more {
    margin-left: 3px;
}
.x-name {
    margin-left: -4px;
    color: #222;
}
.x-ctrls {
    margin-left: auto;
    display: flex;
    align-items: center;
    gap: 36px;
    padding-right: 18px;
}
.x-tabs {
    height: 25px;
    flex: none;
    display: flex;
    border-bottom: 1px solid #dadbdc;
}
.x-tab {
    height: 25px;
    line-height: 26px;
    text-align: center;
}
.x-file {
    width: 56px;
    margin-top: 1px;
    height: 23px;
    line-height: 23px;
    background: #0063b1;
    color: #fff;
}
.x-on {
    width: 57px;
    margin-top: -1px;
    background: #f5f6f7;
    border: 1px solid #dadbdc;
    border-bottom: 0;
}
.x-share {
    margin-left: 16px;
}
.x-view {
    margin-left: 27px;
}
.x-help {
    margin-left: auto;
    padding-right: 5px;
    display: flex;
    align-items: center;
    gap: 10px;
}
.help-dot {
    width: 16px;
    height: 16px;
    line-height: 16px;
    border-radius: 50%;
    background: #0a6cc4;
    color: #fff;
    font-weight: bold;
    text-align: center;
}
.x-ribbon {
    height: 92px;
    flex: none;
    background: #f5f6f7;
    border-bottom: 1px solid #dadbdc;
    display: flex;
    color: #333;
}
.rg {
    display: flex;
    flex-direction: column;
    border-right: 1px solid #e2e3e5;
    margin: 2px 0 0;
}
.rg-body {
    flex: 1;
    display: flex;
}
.rg-label {
    height: 17px;
    line-height: 17px;
    margin-bottom: 0;
    text-align: center;
    color: #555;
    padding-right: 2px;
}
.rg-clip { width: 263px; }
.rg-org { width: 165px; }
.rg-new { width: 84px; }
.rg-new .rg-label { padding-right: 4px; }
.rg-open { width: 132px; }
.rg-open .rg-label { padding-right: 4px; }
.rg-sel { width: 116px; }
.fade {
    color: #8a8a8a;
}
.big {
    display: flex;
    flex-direction: column;
    align-items: center;
    padding-top: 6px;
    text-align: center;
    line-height: 13px;
}
.big span {
    margin-top: 5px;
}
.big-pin {
    width: 68px;
    margin-left: 5px;
}
.big-copy {
    width: 42px;
}
.big-paste {
    width: 41px;
}
.small {
    margin-left: 4px;
    padding-top: 2px;
}
.sm-row {
    height: 22px;
    display: flex;
    align-items: center;
    white-space: nowrap;
}
.sm-row > svg:first-child {
    margin-right: 4px;
}
.sm-row > svg + span + svg {
    margin-left: 5px;
}
.org {
    padding: 11px 0 0 10px;
}
.org-col {
    display: flex;
    flex-direction: column;
    gap: 7px;
}
.org-col:first-child {
    width: 75px;
}
.org-row {
    height: 22px;
    display: flex;
    align-items: center;
    gap: 1px;
}
.org-row svg + span + svg {
    margin-left: 4px;
}
.org-sep {
    width: 1px;
    height: 50px;
    background: #e2e3e5;
    margin-right: 7px;
}
.gap2 {
    margin-left: 3px;
}
.big-folder {
    width: 50px;
}
.new-side {
    display: flex;
    flex-direction: column;
    gap: 5px;
    padding-top: 3px;
    margin-left: 0;
}
.new-side span {
    display: flex;
    align-items: center;
    gap: 1px;
}
.big-prop {
    width: 62px;
    margin-right: 2px;
}
.big-prop .caret-b {
    margin-top: 5px;
}
.sm-open {
    margin-left: 0;
}
.sm-sel {
    flex: 1;
    margin-left: 7px;
}
.x-addr {
    height: 36px;
    flex: none;
    display: flex;
    align-items: center;
    padding-bottom: 3px;
    color: #333;
}
.nav-b { margin-left: 12px; }
.nav-f { margin-left: 16px; }
.nav-d { margin-left: 12px; }
.nav-u { margin-left: 12px; }
.addr-box {
    width: 460px;
    height: 22px;
    margin-left: 7px;
    border: 1px solid #d9d9d9;
    display: flex;
    align-items: center;
    padding-left: 4px;
}
.crumb-c {
    margin-left: 3px;
    color: #777;
    font-size: 13px;
}
.addr-box .crumb:nth-of-type(2) {
    margin-left: 10px;
}
.crumb-s {
    margin: 0 10px;
}
.search-box {
    width: 198px;
    height: 22px;
    margin-left: 7px;
    border: 1px solid #d9d9d9;
    display: flex;
    align-items: center;
    justify-content: space-between;
    padding: 0 8px 0 5px;
    color: #666;
}
.x-main {
    height: 385px;
    flex: none;
    display: flex;
}
.nav-pane {
    width: 156px;
    display: flex;
}
.nav-list {
    list-style: none;
    margin: -1px 1px 0 0;
    padding: 0;
    width: 139px;
    overflow: hidden;
}
.nav-list li {
    height: 24px;
    display: flex;
    align-items: center;
    padding-left: 88px;
    gap: 5px;
    white-space: nowrap;
    overflow: hidden;
}
.nav-on {
    background: #d9d9d9;
}
.v-scroll {
    width: 16px;
    display: flex;
    flex-direction: column;
    background: #f0f0f0;
}
.vs-btn {
    height: 20px;
    display: flex;
    align-items: center;
    justify-content: center;
}
.vs-thumb {
    height: 46px;
    margin-top: 188px;
    background: #cdcdcd;
}
.vs-down {
    margin-top: auto;
    padding-top: 2px;
}
.file-pane {
    flex: 1;
    display: flex;
    flex-direction: column;
}
.f-head {
    height: 23px;
    flex: none;
    display: flex;
    color: #555;
    line-height: 25px;
}
.f-head span {
    border-right: 1px solid #e5e5e5;
}
.h-name {
    width: 419px;
    padding-left: 21px;
}
.h-type {
    width: 120px;
    padding-left: 7px;
}
.h-size {
    width: 80px;
    padding-left: 7px;
}
.f-rows {
    flex: 1;
    padding: 7px 0 0 18px;
}
.f-row {
    width: 598px;
    height: 21px;
    display: flex;
    align-items: center;
    border: 1px solid transparent;
    padding-left: 4px;
    white-space: nowrap;
}
.f-name {
    width: 384px;
    margin-left: 3px;
}
.f-type {
    width: 120px;
    color: #6d6d6d;
}
.f-size {
    width: 66px;
    text-align: right;
    color: #6d6d6d;
}
.f-sel {
    background: #cce8ff;
    border-color: #99d1ff;
}
.h-scroll {
    height: 15px;
    flex: none;
    margin: 0 2px 0 5px;
    background: #f0f0f0;
    display: flex;
}
.hs-btn {
    width: 16px;
    display: flex;
    align-items: center;
    justify-content: center;
}
.hs-thumb {
    flex: 1;
    background: #cdcdcd;
}
.x-status {
    height: 25px;
    flex: none;
    display: flex;
    align-items: center;
    color: #3c4a5c;
}
.xs-1 { margin-left: 14px; width: 65px; }
.xs-2 { width: 84px; }
.xs-views {
    margin-left: auto;
    margin-right: 6px;
    display: flex;
    gap: 1px;
    height: 22px;
}
.xv {
    width: 21px;
    display: flex;
    align-items: center;
    justify-content: center;
}
.xv-on {
    background: #cce8ff;
    border: 1px solid #5fa8dc;
}

/* context menu, sits over explorer */
.menu {
    position: absolute;
    left: 541px;
    top: 173px;
    width: 318px;
    height: 507px;
    background: #eeeeee;
    border: 1px solid #a0a0a0;
    padding: 3px 2px 5px;
    color: #1a1a1a;
}
.mi {
    height: 22px;
    display: flex;
    align-items: center;
    padding: 1px 0 0 8px;
    white-space: nowrap;
}
.mi-open {
    font-weight: bold;
}
.mi-hover {
    background: #fff;
}
.mi-ic {
    width: 16px;
    height: 16px;
    margin-right: 8px;
    flex: none;
}
.mi-arrow {
    margin-left: auto;
    margin-right: 9px;
}
.skype {
    display: block;
    width: 14px;
    height: 14px;
    margin: 1px;
    border-radius: 50%;
    background: #22a5e0;
    color: #fff;
    font-size: 10px;
    line-height: 14px;
    font-weight: bold;
    text-align: center;
}
.m-sep {
    height: 1px;
    margin: 3px 8px;
    background: #a0a0a0;
}

/* watermark */
.watermark {
    position: absolute;
    left: 1038px;
    top: 608px;
}
.wm-text {
    font-family: Lato, "Liberation Sans", sans-serif;
    font-size: 50px;
    font-weight: 400;
    fill: rgba(195, 195, 195, .55);
}
```
